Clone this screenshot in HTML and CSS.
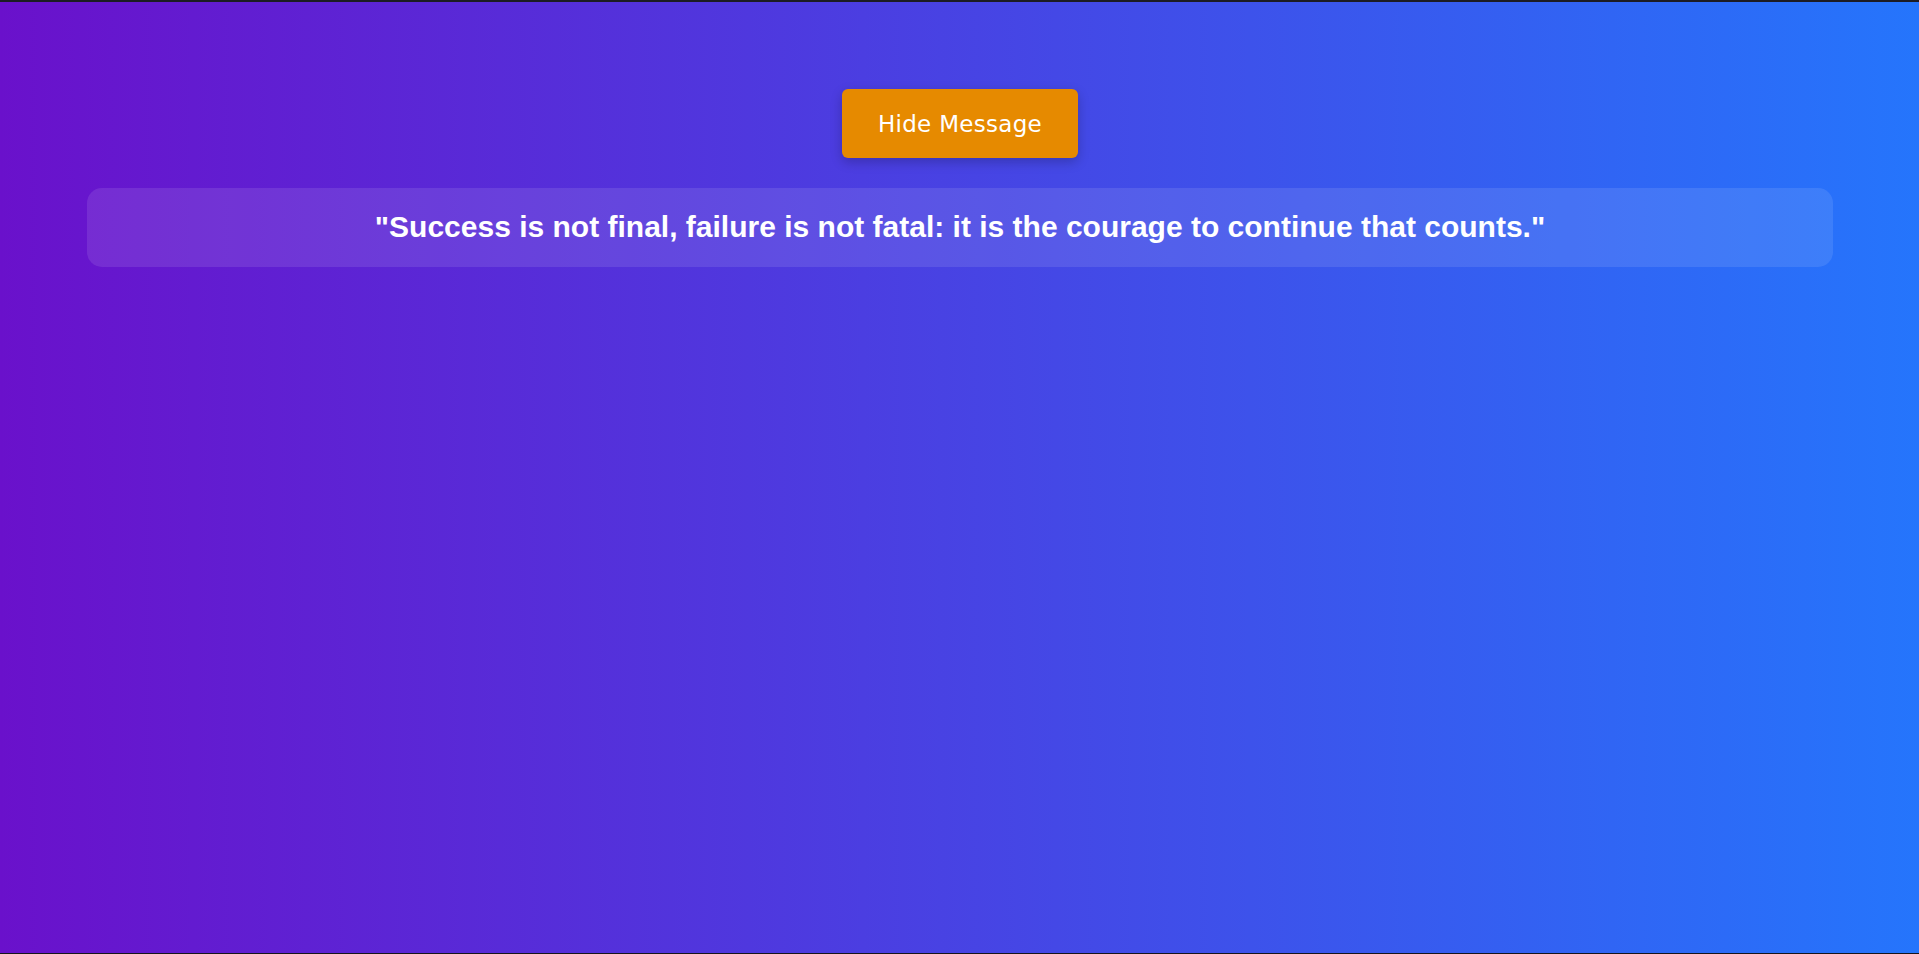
FILE: index.html
```html
<!DOCTYPE html>
<html lang="en">
<head>
<meta charset="utf-8">
<title>Quote</title>
<link rel="stylesheet" href="styles.css">
</head>
<body>
<main class="page">
  <button class="toggle-btn" type="button">Hide Message</button>
  <div class="quote-box">
    <p class="quote">"Success is not final, failure is not fatal: it is the courage to continue that counts."</p>
  </div>
</main>
</body>
</html>
```

FILE: styles.css
```css
html, body {
  margin: 0;
  padding: 0;
  height: 100%;
}

body {
  box-sizing: border-box;
  border-top: 2px solid #1c1c24;
  border-bottom: 1px solid #15151c;
  background: linear-gradient(to right, #6a11cb, #2575fc);
  font-family: "Liberation Sans", Arial, sans-serif;
  color: #fff;
}

.page {
  display: flex;
  flex-direction: column;
  align-items: center;
  padding: 87px 86px 0 87px;
  gap: 30px;
}

.toggle-btn {
  width: 236px;
  height: 69px;
  padding: 1px 0 0;
  border: none;
  border-radius: 6px;
  background: #e68a00;
  color: #fff;
  font-family: "DejaVu Sans", Verdana, sans-serif;
  font-size: 23px;
  letter-spacing: 0.3px;
  box-shadow: 0 4px 12px rgba(0, 0, 0, 0.22);
  cursor: pointer;
}

.quote-box {
  align-self: stretch;
  box-sizing: border-box;
  height: 79px;
  display: flex;
  align-items: center;
  justify-content: center;
  border-radius: 15px;
  background: rgba(255, 255, 255, 0.1);
}

.quote {
  margin: 0;
  padding-bottom: 1px;
  font-size: 30px;
  font-weight: bold;
  line-height: 34px;
  text-align: center;
}
```
